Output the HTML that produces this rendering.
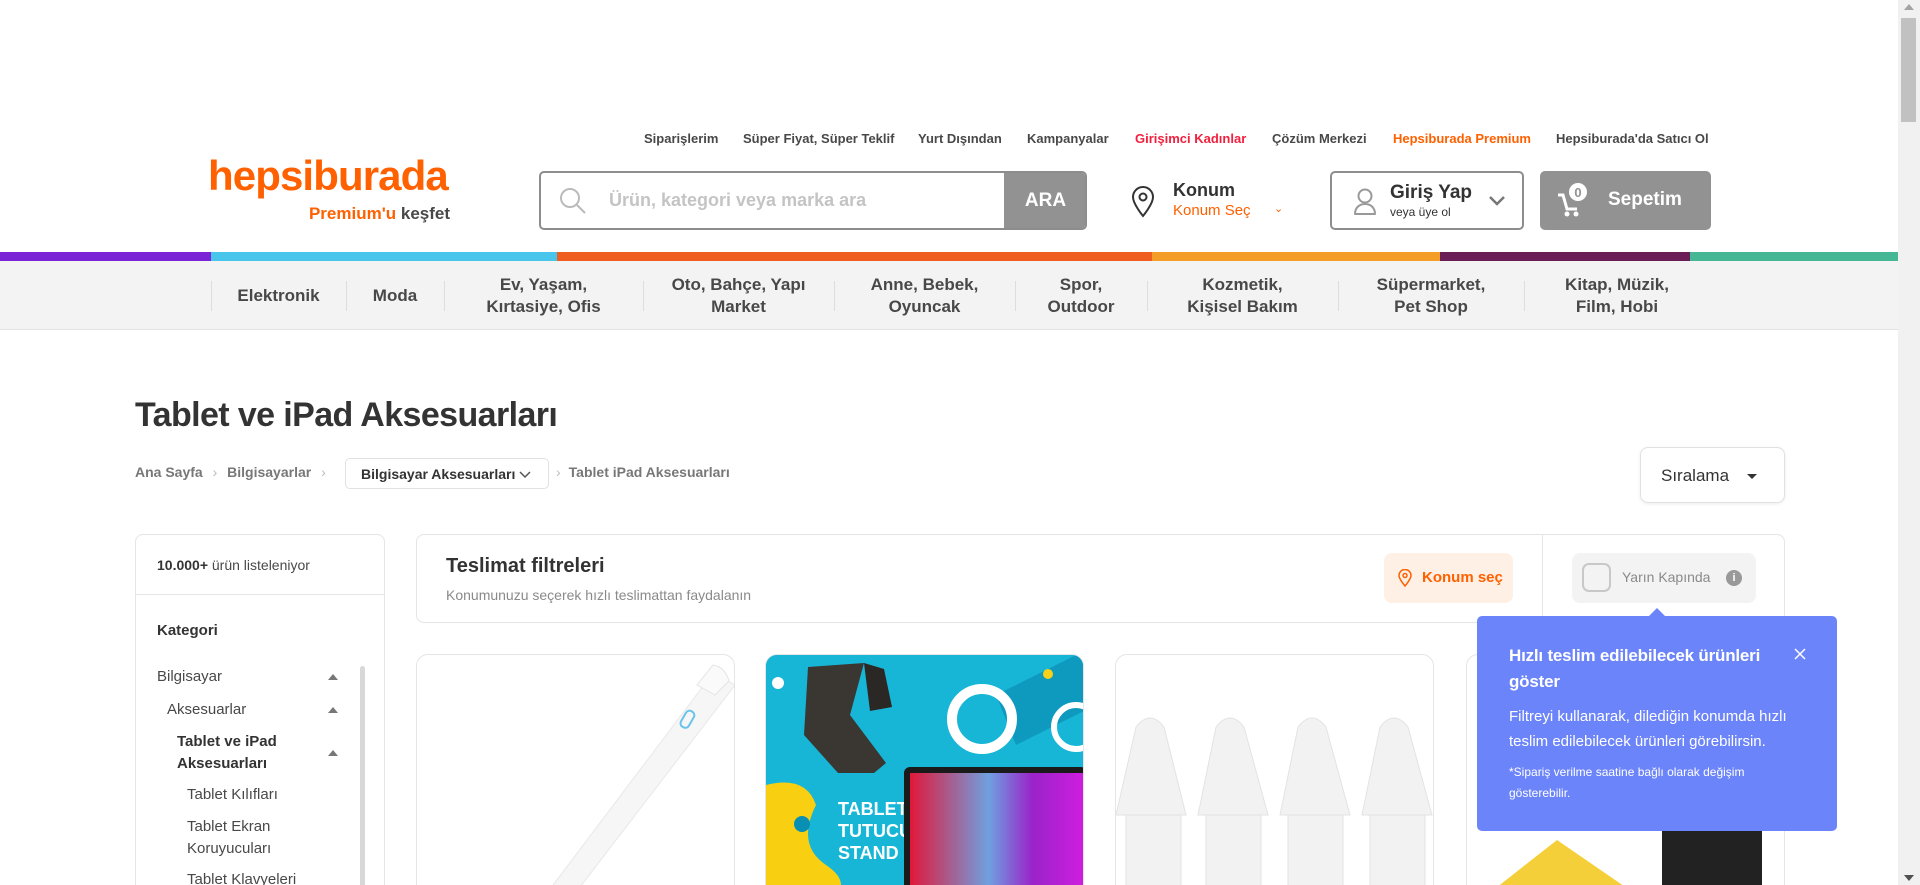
<!DOCTYPE html>
<html><head><meta charset="utf-8"><style>
*{box-sizing:border-box;margin:0;padding:0}
html,body{width:1920px;height:885px;overflow:hidden}
body{background:#fff;font-family:"Liberation Sans",Arial,sans-serif;color:#484848;position:relative}
.a{position:absolute}
.tl{top:131px;font-size:13px;font-weight:bold;color:#484848;white-space:nowrap}
.nav{top:261px;left:0;width:1898px;height:69px;background:#f3f3f3;border-bottom:1px solid #e2e2e2}
.ni{position:absolute;top:0;height:69px;display:flex;align-items:center;justify-content:center;text-align:center;font-size:17px;font-weight:bold;color:#484848;line-height:22px}
.sep{position:absolute;top:20px;width:1px;height:30px;background:#ddd}
.card{position:absolute;top:654px;height:231px;border:1px solid #e5e5e5;border-bottom:none;border-radius:12px 12px 0 0;overflow:hidden;background:#fff}
.cat{position:absolute;font-size:15px;color:#484848;line-height:22px}
.tri{position:absolute;left:328px;width:0;height:0;border-left:5px solid transparent;border-right:5px solid transparent;border-bottom:6px solid #777}
</style></head><body>
<!-- scrollbar -->
<div class="a" style="left:1898px;top:0;width:22px;height:885px;background:#f1f1f1"></div>
<div class="a" style="left:1901px;top:18px;width:15px;height:104px;background:#c1c1c1"></div>
<div class="a" style="left:1904px;top:4px;width:0;height:0;border-left:5px solid transparent;border-right:5px solid transparent;border-bottom:6px solid #a3a3a3"></div>
<div class="a" style="left:1904px;top:875px;width:0;height:0;border-left:5px solid transparent;border-right:5px solid transparent;border-top:6px solid #505050"></div>

<!-- top links -->
<div class="a tl" style="left:644px">Siparişlerim</div>
<div class="a tl" style="left:743px">Süper Fiyat, Süper Teklif</div>
<div class="a tl" style="left:918px">Yurt Dışından</div>
<div class="a tl" style="left:1027px">Kampanyalar</div>
<div class="a tl" style="left:1135px;color:#f2203e">Girişimci Kadınlar</div>
<div class="a tl" style="left:1272px">Çözüm Merkezi</div>
<div class="a tl" style="left:1393px;color:#ff6000">Hepsiburada Premium</div>
<div class="a tl" style="left:1556px">Hepsiburada'da Satıcı Ol</div>

<!-- logo -->
<div class="a" style="left:208px;top:153px;font-size:42px;font-weight:bold;color:#ff6000;letter-spacing:-0.9px;line-height:46px">hepsiburada</div>
<div class="a" style="left:300px;top:204px;width:150px;text-align:right;font-size:17px;font-weight:bold;color:#ff6000;white-space:nowrap">Premium'u <span style="color:#484848">keşfet</span></div>

<!-- search -->
<div class="a" style="left:539px;top:171px;width:548px;height:59px;border:2px solid #8d8d8d;border-radius:5px;overflow:hidden">
  <svg class="a" style="left:18px;top:14px" width="28" height="28" viewBox="0 0 28 28"><circle cx="11" cy="11" r="9" fill="none" stroke="#bbb" stroke-width="2"/><path d="M18 18l8 8" stroke="#bbb" stroke-width="2"/></svg>
  <div class="a" style="left:68px;top:17px;font-size:18px;font-weight:bold;color:#c4c4c4">Ürün, kategori veya marka ara</div>
  <div class="a" style="left:463px;top:0;width:83px;height:55px;background:#929292;color:#fff;font-size:19px;font-weight:bold;display:flex;align-items:center;justify-content:center">ARA</div>
</div>

<!-- konum -->
<svg class="a" style="left:1130px;top:186px" width="26" height="32" viewBox="0 0 26 32"><path d="M13 30C13 30 3 18 3 11a10 10 0 0 1 20 0c0 7-10 19-10 19z" fill="none" stroke="#333" stroke-width="2"/><circle cx="13" cy="11" r="3.5" fill="none" stroke="#333" stroke-width="2"/></svg>
<div class="a" style="left:1173px;top:180px;font-size:18px;font-weight:bold;color:#333">Konum</div>
<div class="a" style="left:1173px;top:202px;font-size:15px;color:#ff6000">Konum Seç</div>
<div class="a" style="left:1274px;top:202px;font-size:11px;color:#ff6000">⌄</div>

<!-- giriş -->
<div class="a" style="left:1330px;top:171px;width:194px;height:59px;border:2px solid #8d8d8d;border-radius:5px">
  <svg class="a" style="left:20px;top:14px" width="26" height="30" viewBox="0 0 26 30"><circle cx="13" cy="9" r="6.5" fill="none" stroke="#999" stroke-width="2"/><path d="M3 27c0-6 4-10 10-10s10 4 10 10z" fill="none" stroke="#999" stroke-width="2" stroke-linejoin="round"/></svg>
  <div class="a" style="left:58px;top:9px;font-size:19px;font-weight:bold;color:#333">Giriş Yap</div>
  <div class="a" style="left:58px;top:32px;font-size:12px;color:#333">veya üye ol</div>
  <svg class="a" style="left:156px;top:22px" width="18" height="12" viewBox="0 0 18 12"><path d="M2 2l7 7 7-7" fill="none" stroke="#777" stroke-width="2.5"/></svg>
</div>

<!-- sepet -->
<div class="a" style="left:1540px;top:171px;width:171px;height:59px;background:#929292;border-radius:5px">
  <svg class="a" style="left:16px;top:10px" width="34" height="38" viewBox="0 0 34 38"><path d="M2 14l5 0 4 14h10" fill="none" stroke="#fff" stroke-width="3"/><circle cx="11" cy="33" r="2.5" fill="#fff"/><circle cx="20" cy="33" r="2.5" fill="#fff"/><circle cx="22" cy="11" r="9" fill="#fff"/><text x="22" y="16" text-anchor="middle" font-family="Liberation Sans" font-size="13" font-weight="bold" fill="#929292">0</text></svg>
  <div class="a" style="left:68px;top:18px;font-size:19px;font-weight:bold;color:#fff">Sepetim</div>
</div>

<!-- color bar -->
<div class="a" style="top:252px;left:0;height:9px;width:211px;background:#7b24d7"></div>
<div class="a" style="top:252px;left:211px;height:9px;width:346px;background:#47c5eb"></div>
<div class="a" style="top:252px;left:557px;height:9px;width:595px;background:#ef5e20"></div>
<div class="a" style="top:252px;left:1152px;height:9px;width:288px;background:#f49d28"></div>
<div class="a" style="top:252px;left:1440px;height:9px;width:250px;background:#6b1d57"></div>
<div class="a" style="top:252px;left:1690px;height:9px;width:208px;background:#45b794"></div>

<!-- nav -->
<div class="a nav">
  <div class="sep" style="left:211px"></div><div class="sep" style="left:346px"></div><div class="sep" style="left:444px"></div><div class="sep" style="left:643px"></div><div class="sep" style="left:834px"></div><div class="sep" style="left:1015px"></div><div class="sep" style="left:1147px"></div><div class="sep" style="left:1338px"></div><div class="sep" style="left:1524px"></div>
  <div class="ni" style="left:211px;width:135px">Elektronik</div>
  <div class="ni" style="left:346px;width:98px">Moda</div>
  <div class="ni" style="left:444px;width:199px">Ev, Yaşam,<br>Kırtasiye, Ofis</div>
  <div class="ni" style="left:643px;width:191px">Oto, Bahçe, Yapı<br>Market</div>
  <div class="ni" style="left:834px;width:181px">Anne, Bebek,<br>Oyuncak</div>
  <div class="ni" style="left:1015px;width:132px">Spor,<br>Outdoor</div>
  <div class="ni" style="left:1147px;width:191px">Kozmetik,<br>Kişisel Bakım</div>
  <div class="ni" style="left:1338px;width:186px">Süpermarket,<br>Pet Shop</div>
  <div class="ni" style="left:1524px;width:186px">Kitap, Müzik,<br>Film, Hobi</div>
</div>

<!-- title -->
<div class="a" style="left:135px;top:396px;font-size:34px;font-weight:bold;color:#333;letter-spacing:-0.6px;white-space:nowrap">Tablet ve iPad Aksesuarları</div>

<!-- breadcrumb -->
<div class="a" style="left:135px;top:464px;font-size:14px;font-weight:bold;color:#777;white-space:nowrap">Ana Sayfa <span style="color:#bbb;font-weight:normal;margin:0 6px">›</span> Bilgisayarlar <span style="color:#bbb;font-weight:normal;margin:0 6px">›</span></div>
<div class="a" style="left:345px;top:458px;width:204px;height:31px;border:1px solid #e1e1e1;border-radius:5px;font-size:14px;font-weight:bold;color:#333;padding:7px 0 0 15px;white-space:nowrap">Bilgisayar Aksesuarları <svg width="12" height="8" viewBox="0 0 12 8"><path d="M1 1l5 5 5-5" fill="none" stroke="#555" stroke-width="1.5"/></svg></div>
<div class="a" style="left:556px;top:464px;font-size:14px;font-weight:bold;color:#777;white-space:nowrap"><span style="color:#bbb;font-weight:normal;margin-right:8px">›</span>Tablet iPad Aksesuarları</div>

<!-- sıralama -->
<div class="a" style="left:1640px;top:447px;width:145px;height:56px;border:1px solid #e1e1e1;border-radius:8px;box-shadow:0 1px 3px rgba(0,0,0,.08)">
  <div class="a" style="left:20px;top:18px;font-size:17px;color:#333">Sıralama</div>
  <div class="a" style="left:106px;top:26px;width:0;height:0;border-left:5px solid transparent;border-right:5px solid transparent;border-top:5px solid #333"></div>
</div>

<!-- sidebar -->
<div class="a" style="left:135px;top:534px;width:250px;height:351px;border:1px solid #e5e5e5;border-bottom:none;border-radius:8px 8px 0 0">
  <div class="a" style="left:21px;top:22px;font-size:14px;color:#484848;white-space:nowrap"><b style="color:#333">10.000+</b> ürün listeleniyor</div>
  <div class="a" style="left:0;top:59px;width:248px;height:1px;background:#e5e5e5"></div>
  <div class="a" style="left:21px;top:87px;font-size:15px;font-weight:bold;color:#333">Kategori</div>
  <div class="a" style="left:224px;top:131px;width:5px;height:220px;background:#d8d8d8;border-radius:3px 3px 0 0"></div>
</div>
<div class="cat" style="left:157px;top:666px">Bilgisayar</div><div class="tri" style="top:674px"></div>
<div class="cat" style="left:167px;top:699px">Aksesuarlar</div><div class="tri" style="top:707px"></div>
<div class="cat" style="left:177px;top:731px;font-weight:bold;color:#333">Tablet ve iPad<br>Aksesuarları</div><div class="tri" style="top:750px"></div>
<div class="cat" style="left:187px;top:784px">Tablet Kılıfları</div>
<div class="cat" style="left:187px;top:816px">Tablet Ekran<br>Koruyucuları</div>
<div class="cat" style="left:187px;top:869px">Tablet Klavyeleri</div>

<!-- delivery filter -->
<div class="a" style="left:416px;top:534px;width:1369px;height:89px;border:1px solid #e5e5e5;border-radius:8px">
  <div class="a" style="left:29px;top:20px;font-size:20px;font-weight:bold;color:#333">Teslimat filtreleri</div>
  <div class="a" style="left:29px;top:52px;font-size:14px;color:#8a8a8a">Konumunuzu seçerek hızlı teslimattan faydalanın</div>
  <div class="a" style="left:967px;top:18px;width:129px;height:50px;background:#fff0e6;border-radius:8px">
    <svg class="a" style="left:14px;top:16px" width="14" height="18" viewBox="0 0 14 18"><path d="M7 17S1 10 1 6.5a6 6 0 0 1 12 0C13 10 7 17 7 17z" fill="none" stroke="#ff6000" stroke-width="1.5"/><circle cx="7" cy="6.5" r="2" fill="none" stroke="#ff6000" stroke-width="1.5"/></svg>
    <div class="a" style="left:38px;top:16px;font-size:15px;font-weight:bold;color:#ff6000;white-space:nowrap">Konum seç</div>
  </div>
  <div class="a" style="left:1125px;top:0;width:1px;height:87px;background:#e5e5e5"></div>
  <div class="a" style="left:1155px;top:18px;width:184px;height:50px;background:#f3f3f3;border-radius:8px">
    <div class="a" style="left:10px;top:10px;width:29px;height:29px;border:2px solid #c8c8c8;border-radius:7px;background:#f3f3f3"></div>
    <div class="a" style="left:50px;top:16px;font-size:14px;color:#8a8a8a;white-space:nowrap">Yarın Kapında</div>
    <div class="a" style="left:154px;top:17px;width:16px;height:16px;border-radius:50%;background:#999;color:#fff;font-size:11px;font-weight:bold;text-align:center;line-height:16px">i</div>
  </div>
</div>

<!-- cards -->
<div class="card" style="left:416px;width:319px">
  <svg width="319" height="231" viewBox="0 0 319 231"><path d="M296 18 L318 30 L140 262 L112 262 Z" fill="#f6f6f6" stroke="#e8e8e8"/><path d="M296 10 q12 2 16 16 l-14 14 l-18 -10z" fill="#fafafa" stroke="#e4e4e4"/><rect x="266" y="55" width="9" height="18" rx="4" transform="rotate(30 270 64)" fill="none" stroke="#6ac3ea" stroke-width="2"/></svg>
</div>
<div class="card" style="left:765px;width:319px;background:#1ab9d9">
  <svg width="319" height="231" viewBox="0 0 319 231">
    <rect x="0" y="0" width="319" height="231" fill="#17b6d6"/>
    <path d="M230 40 l100 -50 l0 60 l-80 40z" fill="#0a8fb4" opacity=".7"/>
    <circle cx="12" cy="28" r="6" fill="#fff"/><circle cx="282" cy="19" r="5" fill="#f6d11a"/>
    <circle cx="216" cy="64" r="30" fill="none" stroke="#fff" stroke-width="10"/>
    <circle cx="310" cy="72" r="22" fill="none" stroke="#fff" stroke-width="6"/>
    <path d="M42 12 L98 8 L84 60 L120 108 L108 118 L72 118 L38 80 Z" fill="#3a3632"/>
    <path d="M98 8 L118 14 L126 52 L104 56 Z" fill="#2a2724"/>
    <path d="M0 130 q40 -10 50 20 q-20 40 10 60 q30 20 0 40 l-60 10z" fill="#f8cf11"/>
    <circle cx="36" cy="169" r="8" fill="#0a8fb4"/>
    <text x="72" y="160" font-family="Liberation Sans" font-weight="bold" font-size="18" fill="#fff">TABLET</text>
    <text x="72" y="182" font-family="Liberation Sans" font-weight="bold" font-size="18" fill="#fff">TUTUCU</text>
    <text x="72" y="204" font-family="Liberation Sans" font-weight="bold" font-size="18" fill="#fff">STAND</text>
    <rect x="138" y="112" width="183" height="160" rx="6" fill="#1a1a1a"/>
    <defs><linearGradient id="g" x1="0" y1="0" x2="1" y2="0"><stop offset="0" stop-color="#e0183a"/><stop offset=".45" stop-color="#6fa0e0"/><stop offset=".7" stop-color="#9a23c9"/><stop offset="1" stop-color="#d01ee0"/></linearGradient></defs>
    <rect x="144" y="118" width="175" height="150" fill="url(#g)"/>
  </svg>
</div>
<div class="card" style="left:1115px;width:319px">
  <svg width="319" height="231" viewBox="0 0 319 231">
    <g fill="#f2f2f2" stroke="#e3e3e3">
      <path d="M0 160 L20 72 q14 -18 28 0 L70 160 Z M10 160 h55 v100 h-55z"/>
      <path d="M82 160 L100 72 q14 -18 28 0 L152 160 Z M90 160 h55 v100 h-55z"/>
      <path d="M164 160 L182 72 q14 -18 28 0 L234 160 Z M172 160 h55 v100 h-55z"/>
      <path d="M246 160 L264 72 q14 -18 28 0 L316 160 Z M254 160 h55 v100 h-55z"/>
    </g>
  </svg>
</div>
<div class="card" style="left:1466px;width:319px">
  <svg width="319" height="231" viewBox="0 0 319 231"><path d="M20 240 L90 185 L170 240 Z" fill="#f5cf3a"/><rect x="195" y="150" width="100" height="90" fill="#222"/></svg>
</div>

<!-- tooltip -->
<div class="a" style="left:1648px;top:608px;width:0;height:0;border-left:9px solid transparent;border-right:9px solid transparent;border-bottom:9px solid #6c84f9"></div>
<div class="a" style="left:1477px;top:616px;width:360px;height:215px;background:#6c84f9;border-radius:5px;color:#fff">
  <div class="a" style="left:32px;top:27px;width:290px;font-size:17px;font-weight:bold;line-height:26px;letter-spacing:-0.2px">Hızlı teslim edilebilecek ürünleri göster</div>
  <svg class="a" style="left:317px;top:32px" width="12" height="12" viewBox="0 0 12 12"><path d="M1 1l10 10M11 1L1 11" stroke="#fff" stroke-width="1.5"/></svg>
  <div class="a" style="left:32px;top:88px;width:290px;font-size:15px;line-height:25px">Filtreyi kullanarak, dilediğin konumda hızlı teslim edilebilecek ürünleri görebilirsin.</div>
  <div class="a" style="left:32px;top:146px;width:265px;font-size:12px;line-height:21px">*Sipariş verilme saatine bağlı olarak değişim gösterebilir.</div>
</div>
</body></html>
